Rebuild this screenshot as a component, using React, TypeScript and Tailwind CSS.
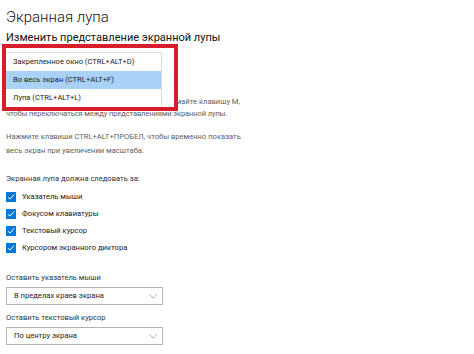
import React from "react";

const FOLLOW = ["Указатель мыши", "Фокусом клавиатуры", "Текстовый курсор", "Курсором экранного диктора"];
const MODES = ["Закрепленное окно (CTRL+ALT+D)", "Во весь экран (CTRL+ALT+F)", "Лупа (CTRL+ALT+L)"];

function Check() {
  return (
    <span className="w-[10px] h-[10px] bg-[#0078d7] flex items-center justify-center shrink-0">
      <svg width="8" height="8" viewBox="0 0 12 12" fill="none" stroke="white" strokeWidth={1.5}>
        <path d="M1.5 6.2l3 3 6-7" />
      </svg>
    </span>
  );
}

function Select({ value }: { value: string }) {
  return (
    <div className="w-[157px] h-[18px] border border-[#b4b4b4] bg-white flex items-center justify-between pl-[7px] pr-[5px] text-[7.6px] text-[#222] whitespace-nowrap">
      <span>{value}</span>
      <svg width="8" height="5" viewBox="0 0 9 6" fill="none" stroke="#9a9a9a" strokeWidth={1}>
        <path d="M0.5 0.8l4 4 4-4" />
      </svg>
    </div>
  );
}

export default function App() {
  return (
    <div className="w-[474px] h-[354px] bg-white overflow-hidden relative" style={{ fontFamily: 'Roboto, "Noto Sans", sans-serif' }}>
      <div className="pl-[6px] pt-[5px]">
        <h1 className="text-[15px] leading-[24px] text-[#111] font-light">Экранная лупа</h1>
        <h2 className="text-[11px] leading-[14px] text-[#111] mt-[2px] whitespace-nowrap">Изменить представление экранной лупы</h2>

        <div className="h-[51px]" />
        <div className="text-[7.6px] leading-[12px] text-[#5f5f5f] whitespace-nowrap">
          <p className="w-[234px] text-right">Удерживая клавиши CTRL+ALT, нажимайте клавишу M,</p>
          <p className="tracking-[-0.15px]">чтобы переключаться между представлениями экранной лупы.</p>
        </div>
        <p className="text-[7.6px] leading-[14px] text-[#5f5f5f] mt-[10px] whitespace-nowrap">
          Нажмите клавиши CTRL+ALT+ПРОБЕЛ, чтобы временно показать<br />
          весь экран при увеличении масштаба.
        </p>

        <p className="text-[7.6px] leading-[14px] text-[#333] mt-[14px] whitespace-nowrap">Экранная лупа должна следовать за:</p>
        <div className="flex flex-col gap-[4px] mt-[4px]">
          {FOLLOW.map(f => (
            <div key={f} className="flex items-center gap-[6px] h-[13px] text-[7.6px] text-[#222] whitespace-nowrap">
              <Check />
              <span>{f}</span>
            </div>
          ))}
        </div>

        <p className="text-[7.6px] leading-[14px] text-[#333] mt-[17px] whitespace-nowrap">Оставить указатель мыши</p>
        <div className="mt-[2px]"><Select value="В пределах краев экрана" /></div>
        <p className="text-[7.6px] leading-[14px] text-[#333] mt-[6px] whitespace-nowrap">Оставить текстовый курсор</p>
        <div className="mt-[2px]"><Select value="По центру экрана" /></div>
      </div>

      {/* dropdown with red highlight */}
      <div className="absolute left-[2px] top-[44px] w-[176px] h-[67px] border-[4px] border-[#d81e2c] bg-white pt-[4px] pr-[12px]">
        <div className="bg-white border-r border-t border-[#dcdcdc] flex flex-col text-[7.6px] text-[#222] whitespace-nowrap">
          {MODES.map((m, i) => (
            <div key={m} className={`h-[18px] flex items-center pl-[7px] ${i === 1 ? "bg-[#a9d2f7]" : ""}`}>{m}</div>
          ))}
        </div>
      </div>
    </div>
  );
}
